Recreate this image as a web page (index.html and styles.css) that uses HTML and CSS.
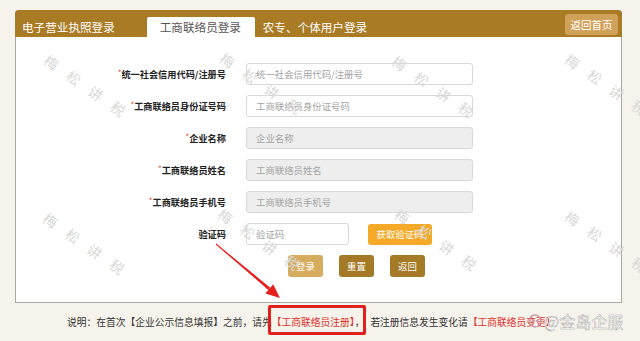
FILE: index.html
```html
<!DOCTYPE html>
<html lang="zh-CN">
<head>
	<meta charset="UTF-8">
	<meta name="viewport" content="width=device-width, initial-scale=1.0">
	<title>工商联络员登录</title>
	<link rel="stylesheet" href="styles.css">
</head>
<body>
	<div class="page">
		<div class="panel">
			<div class="panel-head">
				<div class="tabs">
					<span class="tab">电子营业执照登录</span>
					<span class="tab tab-active">工商联络员登录</span>
					<span class="tab">农专、个体用户登录</span>
				</div>
				<a class="btn-home" href="#">返回首页</a>
			</div>
			<form class="form">
				<div class="row">
					<label class="label"><i>*</i>统一社会信用代码/注册号</label>
					<input class="field" placeholder="统一社会信用代码/注册号">
				</div>
				<div class="row">
					<label class="label"><i>*</i>工商联络员身份证号码</label>
					<input class="field" placeholder="工商联络员身份证号码">
				</div>
				<div class="row">
					<label class="label"><i>*</i>企业名称</label>
					<input class="field field-off" placeholder="企业名称" disabled>
				</div>
				<div class="row">
					<label class="label"><i>*</i>工商联络员姓名</label>
					<input class="field field-off" placeholder="工商联络员姓名" disabled>
				</div>
				<div class="row">
					<label class="label"><i>*</i>工商联络员手机号</label>
					<input class="field field-off" placeholder="工商联络员手机号" disabled>
				</div>
				<div class="row">
					<label class="label">验证码</label>
					<div class="code">
						<input class="field field-code" placeholder="验证码">
						<button type="button" class="btn-code">获取验证码</button>
					</div>
				</div>
				<div class="actions">
					<button type="button" class="btn btn-light">登录</button>
					<button type="button" class="btn">重置</button>
					<button type="button" class="btn">返回</button>
				</div>
			</form>
		</div>
		<p class="note">说明：在首次【企业公示信息填报】之前，请先<span class="note-red note-mark">【工商联络员注册】</span>，<span class="note-gap">若注册信息发生变化请</span><span class="note-red">【工商联络员变更】</span></p>

		<!-- watermarks and annotation -->
		<div class="wm" style="left:46px;top:50px">梅松讲税</div>
		<div class="wm" style="left:222px;top:48px">梅松讲税</div>
		<div class="wm" style="left:394px;top:51px">梅松讲税</div>
		<div class="wm" style="left:567px;top:49px">梅松讲税</div>
		<div class="wm" style="left:45px;top:208px">梅松讲税</div>
		<div class="wm" style="left:220px;top:204px">梅松讲税</div>
		<div class="wm" style="left:397px;top:204px">梅松讲税</div>
		<div class="wm" style="left:567px;top:206px">梅松讲税</div>

		<svg class="arrow" width="640" height="341" viewBox="0 0 640 341">
			<polygon points="215.7,244.4 216.3,243.6 270.3,287.8 268.3,290" fill="#e3201c"/>
			<polygon points="280,298 265.4,293.5 273.2,284.3" fill="#e3201c"/>
		</svg>

		<div class="brand">
			<svg width="16" height="16" viewBox="0 0 16 16">
				<path d="M3 5 C5 1 11 1 13 5 C15 9 12 14 8 14 C4 14 1 9 3 5 Z" fill="none" stroke="#c9a3a8" stroke-width="1.3"/>
				<circle cx="6" cy="8" r="1.2" fill="#c9a3a8"/>
				<circle cx="10" cy="8" r="1.2" fill="#c9a3a8"/>
			</svg>
			<span>@金岛企服</span>
		</div>
	</div>
</body>
</html>
```

FILE: styles.css
```css
*,
*::before,
*::after {
	box-sizing: border-box;
	margin: 0;
	padding: 0;
}

html,
body {
	height: 100%;
}

body {
	font-family: "Noto Sans CJK SC", "Noto Sans", sans-serif;
	background-color: #f6f3ec;
	color: #333;
	overflow: hidden;
}

.page {
	position: relative;
	width: 640px;
	height: 341px;
	padding: 10px 18px 0 15px;
	overflow: hidden;
}

.panel {
	background-color: #fff;
	border: 1px solid #a9a7a3;
	border-top: none;
	border-radius: 4px 4px 0 0;
}

.panel-head {
	display: flex;
	align-items: flex-end;
	justify-content: space-between;
	height: 27px;
	margin: 0 -1px;
	padding: 0 4px 2px 7px;
	background-color: #a97b25;
	border-radius: 4px 4px 0 0;
}

.tabs {
	display: flex;
	align-items: flex-end;
	margin-bottom: -2px;
}

.tab {
	font-size: 11.6px;
	line-height: 20px;
	color: #fff;
}

.tab:first-child {
	margin-right: 32px;
}

.tab-active {
	width: 108px;
	margin-right: 8px;
	padding-left: 13px;
	background-color: #fff;
	color: #555;
	border-radius: 2px 2px 0 0;
}

.btn-home {
	display: block;
	width: 53px;
	height: 21px;
	font-size: 10.5px;
	line-height: 21px;
	text-align: center;
	color: #fff;
	text-decoration: none;
	background-color: #d0a259;
	border-radius: 3px;
}

.form {
	padding: 26px 0 25px;
}

.row {
	display: grid;
	grid-template-columns: 210px 227px;
	column-gap: 20px;
	align-items: center;
	margin-bottom: 10px;
}

.label {
	font-size: 9.2px;
	font-weight: 700;
	text-align: right;
	color: #222;
}

.label i {
	font-style: normal;
	font-weight: 400;
	font-size: 8px;
	color: #e23a2c;
	vertical-align: 2px;
}

.field {
	width: 100%;
	height: 22px;
	padding-left: 9px;
	font-family: inherit;
	font-size: 9.4px;
	color: #333;
	background-color: #fff;
	border: 1px solid #d8d8d8;
	border-radius: 3px;
	outline: none;
}

.field::placeholder {
	color: #a4a4a4;
}

.field-off {
	background-color: #eeeeee;
}

.code {
	display: flex;
	align-items: center;
	gap: 19px;
}

.field-code {
	width: 103px;
}

.btn-code {
	width: 64px;
	height: 21px;
	font-family: inherit;
	font-size: 9.4px;
	color: #fff;
	background-color: #f4a927;
	border: none;
	border-radius: 3px;
}

.actions {
	display: flex;
	gap: 16px;
	padding-left: 272px;
}

.btn {
	width: 35px;
	height: 22px;
	font-family: inherit;
	font-size: 9.4px;
	color: #fff;
	background-color: #a57a26;
	border: none;
	border-radius: 3px;
}

.btn-light {
	background-color: #d6ac5f;
}

.note {
	padding: 9px 0 0 52px;
	font-size: 9.75px;
	line-height: 20px;
	color: #333;
	white-space: nowrap;
}

.note-red {
	color: #e0302a;
}

.note-gap {
	margin-left: 6px;
}

.note-mark {
	position: relative;
}

.note-mark::after {
	content: "";
	position: absolute;
	left: -4px;
	right: -11px;
	top: -10px;
	bottom: -6px;
	border: 3px solid #e0201d;
	border-radius: 2px;
}

.wm {
	position: absolute;
	width: 110px;
	font-size: 14px;
	letter-spacing: 13px;
	line-height: 16px;
	color: #d9d9d9;
	white-space: nowrap;
	transform: rotate(35deg);
	transform-origin: 0 50%;
	pointer-events: none;
}

.arrow {
	position: absolute;
	top: 0;
	left: 0;
	pointer-events: none;
}

.brand {
	position: absolute;
	left: 527px;
	top: 311px;
	display: flex;
	align-items: center;
	gap: 1px;
	font-size: 16px;
	line-height: 20px;
	color: #fff;
	-webkit-text-stroke: 0.45px #a8a8a8;
}
```
